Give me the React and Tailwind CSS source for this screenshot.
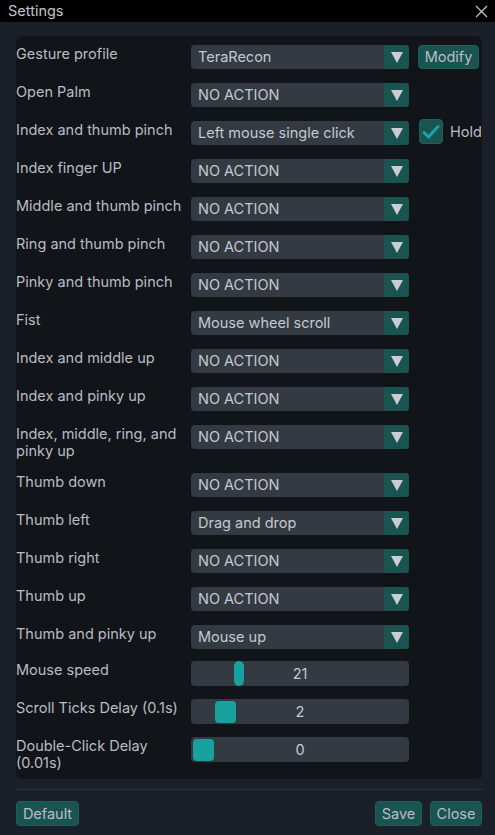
import React from "react";

const font = { fontFamily: "Inter, Roboto, 'Noto Sans', sans-serif" };

function Arrow() {
  return (
    <div className="w-[25px] h-full bg-[#1a5450] rounded-r-[4px] flex items-center justify-center">
      <svg width="12" height="11" viewBox="0 0 12 11">
        <polygon points="0,0 12,0 6,11" fill="#c9ccd1" />
      </svg>
    </div>
  );
}

function Select({ value }) {
  return (
    <div className="w-[218px] h-[24px] bg-[#343a42] rounded-[4px] flex items-center shrink-0">
      <div className="flex-1 pl-[7px] text-[14.5px] text-[#c5c9cf] leading-[24px] whitespace-nowrap overflow-hidden">
        {value}
      </div>
      <Arrow />
    </div>
  );
}

function Label({ children }) {
  return (
    <div className="w-[175px] shrink-0 text-[14.5px] leading-[17px] text-[#b8bdc4] pr-[2px]">
      {children}
    </div>
  );
}

function Row({ label, value, extra }) {
  return (
    <div className="flex items-start">
      <Label>{label}</Label>
      <Select value={value} />
      {extra}
    </div>
  );
}

function Slider({ label, value, thumb }) {
  return (
    <div className="flex items-start">
      <Label>{label}</Label>
      <div className="relative w-[218px] h-[25px] bg-[#343a42] rounded-[4px] flex items-center justify-center shrink-0">
        <span className="text-[14.5px] text-[#c5c9cf] leading-[25px]">{value}</span>
        {thumb}
      </div>
    </div>
  );
}

const btn =
  "bg-[#1a5450] rounded-[4px] border border-[#1f5e5a] flex items-center justify-center text-[14.5px] text-[#b9bec5]";

export default function App() {
  return (
    <div className="w-[495px] min-h-[835px] bg-[#1b1f27] flex flex-col" style={font}>
      <div className="h-[22px] bg-black flex items-center justify-between pl-[8px] pr-[6px]">
        <span className="text-[14.5px] text-[#c0c4cc] leading-[22px]">Settings</span>
        <svg width="13" height="13" viewBox="0 0 13 13" className="mr-[1px]">
          <path d="M1 1 L12 12 M12 1 L1 12" stroke="#c0c4cc" strokeWidth="1.2" />
        </svg>
      </div>
      <div className="ml-[16px] mr-[13px] mt-[14px] bg-[#111419] rounded-[6px] pt-[9px] pb-[8px] flex flex-col">
        <div className="flex flex-col gap-[14px]">
          <Row
            label="Gesture profile"
            value="TeraRecon"
            extra={<div className={"ml-[9px] w-[61px] h-[24px] " + btn}>Modify</div>}
          />
          <Row label="Open Palm" value="NO ACTION" />
          <Row
            label="Index and thumb pinch"
            value="Left mouse single click"
            extra={
              <div className="flex items-center ml-[10px] -mt-[2px] h-[25px]">
                <div className="w-[24px] h-[25px] bg-[#1a5450] rounded-[4px] border border-[#24605c] flex items-center justify-center">
                  <svg width="18" height="16" viewBox="0 0 18 16">
                    <path d="M2 8.5 L6.5 13 L16 2.5" stroke="#18a5a1" strokeWidth="3" fill="none" strokeLinecap="round" strokeLinejoin="round" />
                  </svg>
                </div>
                <span className="ml-[7px] text-[14.5px] text-[#b9bec5]">Hold</span>
              </div>
            }
          />
          <Row label="Index finger UP" value="NO ACTION" />
          <Row label="Middle and thumb pinch" value="NO ACTION" />
          <Row label="Ring and thumb pinch" value="NO ACTION" />
          <Row label="Pinky and thumb pinch" value="NO ACTION" />
          <Row label="Fist" value="Mouse wheel scroll" />
          <Row label="Index and middle up" value="NO ACTION" />
          <Row label="Index and pinky up" value="NO ACTION" />
          <Row label="Index, middle, ring, and pinky up" value="NO ACTION" />
          <Row label="Thumb down" value="NO ACTION" />
          <Row label="Thumb left" value="Drag and drop" />
          <Row label="Thumb right" value="NO ACTION" />
          <Row label="Thumb up" value="NO ACTION" />
          <Row label="Thumb and pinky up" value="Mouse up" />
        </div>
        <div className="flex flex-col gap-[13px] mt-[12px]">
          <Slider
            label="Mouse speed"
            value="21"
            thumb={<div className="absolute left-[43px] top-[0px] w-[10px] h-[25px] rounded-full bg-[#17a29f]" />}
          />
          <Slider
            label="Scroll Ticks Delay (0.1s)"
            value="2"
            thumb={<div className="absolute left-[24px] top-[2px] w-[21px] h-[22px] rounded-[4px] bg-[#17a29f]" />}
          />
          <Slider
            label="Double-Click Delay (0.01s)"
            value="0"
            thumb={<div className="absolute left-[2px] top-[2px] w-[21px] h-[22px] rounded-[4px] bg-[#17a29f]" />}
          />
        </div>
      </div>
      <div className="ml-[16px] mr-[12px] mt-[10px] h-px bg-[#2e333b]" />
      <div className="ml-[16px] mr-[13px] mt-[11px] flex items-center">
        <div className={"w-[63px] h-[25px] " + btn}>Default</div>
        <div className="flex-1" />
        <div className={"w-[47px] h-[25px] " + btn}>Save</div>
        <div className={"ml-[8px] w-[52px] h-[25px] " + btn}>Close</div>
      </div>
    </div>
  );
}
